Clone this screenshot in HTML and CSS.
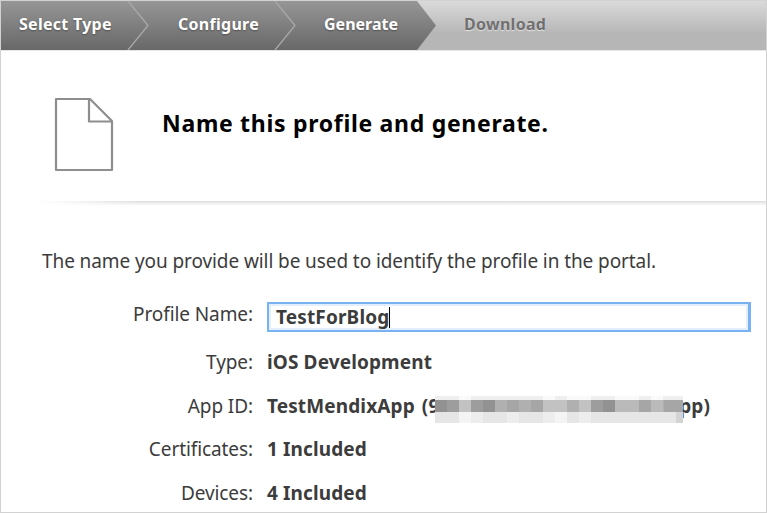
FILE: index.html
```html
<!DOCTYPE html>
<html lang="en">
<head>
<meta charset="utf-8">
<title>Generate profile</title>
<link rel="stylesheet" href="styles.css">
</head>
<body>
<main class="window">
  <nav class="steps">
    <svg class="steps-bg" width="765" height="49" viewBox="0 0 765 49">
      <defs>
        <linearGradient id="done" x1="0" y1="0" x2="0" y2="1"><stop offset="0" stop-color="#969696"/><stop offset="1" stop-color="#686868"/></linearGradient>
      </defs>
      <path d="M0 0H416L435 24.500L416 49H0Z" fill="url(#done)"/>
      <path d="M127 0L147 24.500L127 49M274 0L294 24.500L274 49" fill="none" stroke="#a9a9a9" stroke-width="1.300"/>
    </svg>
    <span class="step s1">Select Type</span>
    <span class="step s2">Configure</span>
    <span class="step s3">Generate</span>
    <span class="step next">Download</span>
  </nav>
  <header class="heading">
    <svg class="doc" width="60" height="75" viewBox="0 0 60 75"><path d="M2 2H36L58 24V73H2ZM35 2V24.500H58" fill="none" stroke="#8e8e8e" stroke-width="2.200" stroke-linejoin="round"/></svg>
    <h1>Name this profile and generate.</h1>
  </header>
  <div class="rule"></div>
  <p class="intro">The name you provide will be used to identify the profile in the portal.</p>
  <div class="form">
    <div class="row name"><span class="label">Profile Name:</span><span class="input">TestForBlog<i class="caret"></i></span></div>
    <div class="row"><span class="label">Type:</span><b>iOS Development</b></div>
    <div class="row"><span class="label">App ID:</span><b class="app-start">TestMendixApp <span class="paren">(9</span></b><svg class="mosaic" width="248" height="29" viewBox="0 0 248 29" shape-rendering="crispEdges">
      <path fill="#efefef" d="M0 1H248V5H0Z"/><path fill="#fafafa" d="M24 1h12v4H24zM108 1h12v4h-12zM132 1h24v4h-24zM180 1h24v4h-24zM216 1h12v4h-12z"/>
      <path fill="#b0b0b0" d="M0 5H248V17H0Z"/>
      <path fill="#929292" d="M0 5h12v12H0zM48 5h12v12H48zM168 5h12v12h-12z"/>
      <path fill="#9d9d9d" d="M12 5h12v12H12zM36 5h12v12H36zM156 5h12v12h-12z"/>
      <path fill="#c2c2c2" d="M24 5h12v12H24zM108 5h24v12h-24zM144 5h12v12h-12z"/>
      <path fill="#a6a6a6" d="M72 5h12v12H72zM96 5h12v12H96zM204 5h12v12h-12zM229 5h19v12h-19z"/>
      <path fill="#bababa" d="M180 5h24v12h-24zM216 5h12v12h-12z"/>
      <path fill="#e6e6e6" d="M0 17H248V28H0Z"/>
      <path fill="#f4f4f4" d="M24 17h12v11H24zM120 17h12v11h-12z"/>
      <path fill="#ededed" d="M36 17h12v11H36zM72 17h12v11H72zM108 17h12v11h-12zM144 17h12v11h-12z"/>
      <path fill="#d4d4d4" d="M241 17h7v11h-7z"/>
    </svg><b class="app-end">pp)</b></div>
    <div class="row"><span class="label">Certificates:</span><b>1 Included</b></div>
    <div class="row"><span class="label">Devices:</span><b>4 Included</b></div>
  </div>
</main>
</body>
</html>
```
FILE: styles.css
```css
* { box-sizing: border-box; }
body { margin: 0; background: #fff; font-family: "Noto Sans", sans-serif; color: #3c3c3c; }
.window { width: 767px; height: 513px; overflow: hidden; border: 1px solid #d2d2d2; }
.steps { position: relative; display: flex; height: 50px; border-bottom: 1px solid #e6e6e6; background: linear-gradient(#dadada, #b6b6b6 66%, #b6b6b6); font: bold 16px/46px "Noto Sans", sans-serif; letter-spacing: .28px; color: #fff; }
.steps-bg { position: absolute; left: 0; top: 0; }
.step { position: relative; white-space: nowrap; text-shadow: 0 1px 2px rgba(0,0,0,.35); }
.s1 { margin-left: 18px; width: 159px; }
.s2 { width: 146px; }
.s3 { width: 140px; letter-spacing: 0; }
.next { color: #707070; text-shadow: 0 1px 1px rgba(255,255,255,.6); }
.heading { display: flex; padding: 46px 0 0 53px; height: 150px; }
.doc { flex: none; }
h1 { margin: 10px 0 0 48px; font: bold 23px/32px "Noto Sans", sans-serif; letter-spacing: .7px; color: #000; white-space: nowrap; }
.rule { height: 5px; margin-left: 37px; background: linear-gradient(90deg, #fff, rgba(255,255,255,0) 100px), linear-gradient(#dedede, #f0f0f0 50%, #fff); }
.intro { margin: 42px 0 0 41px; font-size: 19px; letter-spacing: -.09px; line-height: 26px; white-space: nowrap; }
.form { margin-top: 28px; font-size: 19px; letter-spacing: -.09px; }
.row { display: flex; height: 43.700px; line-height: 28px; white-space: nowrap; align-items: flex-start; }
.row.name { height: 46px; }
.label { width: 252px; margin-right: 14px; flex: none; text-align: right; }
.name .label { line-height: 25px; }
.row b { font-size: 19px; letter-spacing: .12px; }
.input { width: 484px; height: 30px; border: 2px solid #78b2f1; border-right-width: 3px; box-shadow: inset 0 0 0 2px #e3efff; display: flex; align-items: center; padding-left: 7px; font: bold 19px/26px "Noto Sans", sans-serif; letter-spacing: .15px; }
.caret { width: 1px; height: 21px; background: #000; }
.app-start { width: 168px; }
.paren { margin-left: 2px; }
.mosaic { position: relative; z-index: 1; flex: none; margin-top: 3px; }
.app-end { width: 27px; display: flex; justify-content: flex-end; }
```
